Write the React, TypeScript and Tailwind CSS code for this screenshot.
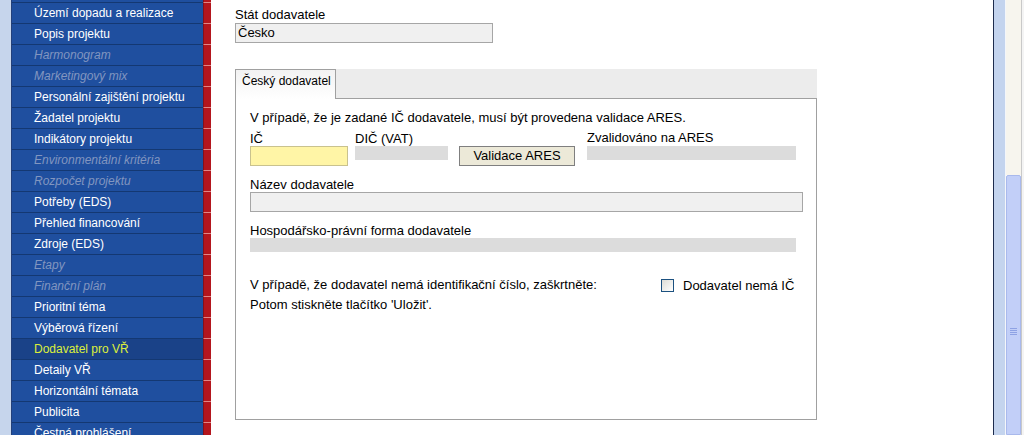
type Kind = "n" | "d" | "s";

const items: [string, Kind][] = [
  ["Území dopadu a realizace", "n"],
  ["Popis projektu", "n"],
  ["Harmonogram", "d"],
  ["Marketingový mix", "d"],
  ["Personální zajištění projektu", "n"],
  ["Žadatel projektu", "n"],
  ["Indikátory projektu", "n"],
  ["Environmentální kritéria", "d"],
  ["Rozpočet projektu", "d"],
  ["Potřeby (EDS)", "n"],
  ["Přehled financování", "n"],
  ["Zdroje (EDS)", "n"],
  ["Etapy", "d"],
  ["Finanční plán", "d"],
  ["Prioritní téma", "n"],
  ["Výběrová řízení", "n"],
  ["Dodavatel pro VŘ", "s"],
  ["Detaily VŘ", "n"],
  ["Horizontální témata", "n"],
  ["Publicita", "n"],
  ["Čestná prohlášení", "n"],
];

function MenuRow({ label, kind }: { label: string; kind: Kind }) {
  const bg = kind === "s" ? "bg-[#1a4288]" : "bg-[#1f4f9f]";
  const text =
    kind === "s"
      ? "text-[#dcef3a]"
      : kind === "d"
        ? "text-[#8296c0] italic"
        : "text-white";
  return (
    <div className="flex h-[21px] shrink-0">
      <div className={`flex-1 overflow-hidden border-t border-[#143872] pl-[22px] text-[12px] leading-[21px] ${bg} ${text}`}>
        {label}
      </div>
      <div className="w-[8px] border-t border-l border-t-[#e08888] border-l-[#86101a] bg-[#b3161e]" />
    </div>
  );
}

function Sidebar() {
  return (
    <div className="flex w-[199px] shrink-0 flex-col overflow-hidden">
      <div className="flex h-[2px] shrink-0">
        <div className="flex-1 bg-[#1f4f9f]" />
        <div className="w-[8px] border-l border-[#86101a] bg-[#b3161e]" />
      </div>
      {items.map(([label, kind]) => (
        <MenuRow key={label} label={label} kind={kind} />
      ))}
    </div>
  );
}

function GrayBar({ w }: { w: string }) {
  return <div className={`h-[14px] bg-[#dcdcdc] ${w}`} />;
}

function Content() {
  return (
    <div className="flex-1 overflow-hidden bg-white pl-[24px] pt-[7px] text-[13px] leading-[15px] text-black">
      <div className="leading-[16px]">Stát dodavatele</div>
      <div className="h-[20px] w-[258px] border border-[#a6a6a6] bg-[#f0f0f0] pl-[2px] leading-[18px]">
        Česko
      </div>

      <div className="mt-[26px] w-[582px]">
        <div className="flex h-[30px]">
          <div className="w-[101px] border-x border-t border-[#a0a0a0] bg-gradient-to-b from-[#f2f2f2] to-white pl-[6px] pt-[4px] text-[12px]">
            Český dodavatel
          </div>
          <div className="flex-1 border-b border-[#a0a0a0] bg-[#ececec]" />
        </div>
        <div className="h-[321px] border-x border-b border-[#a0a0a0] pl-[14px] pt-[11px]">
          <div>V případě, že je zadané IČ dodavatele, musí být provedena validace ARES.</div>

          <div className="mt-[6px] flex">
            <div className="w-[105px]">
              <div>IČ</div>
              <div className="h-[20px] w-[98px] border border-[#c9c28e] bg-[#fff5a6]" />
            </div>
            <div className="w-[104px]">
              <div>DIČ (VAT)</div>
              <GrayBar w="w-[93px]" />
            </div>
            <div className="flex w-[128px] flex-col justify-end">
              <div className="h-[20px] w-[116px] border border-[#7f7f7f] bg-[#ece9d8] text-center leading-[18px]">
                Validace ARES
              </div>
            </div>
            <div>
              <div className="-mt-[1px] mb-[1px]">Zvalidováno na ARES</div>
              <GrayBar w="w-[209px]" />
            </div>
          </div>

          <div className="mt-[11px]">Název dodavatele</div>
          <div className="h-[20px] w-[553px] border border-[#a6a6a6] bg-[#f0f0f0]" />

          <div className="mt-[11px]">Hospodářsko-právní forma dodavatele</div>
          <GrayBar w="w-[546px]" />

          <div className="mt-[23px] flex">
            <div className="w-[411px] leading-[20px]">
              <div>V případě, že dodavatel nemá identifikační číslo, zaškrtněte:</div>
              <div>Potom stiskněte tlačítko 'Uložit'.</div>
            </div>
            <div className="flex h-[20px] items-center">
              <div className="h-[13px] w-[13px] border border-[#1c5180] bg-gradient-to-br from-[#dcdcd6] to-white" />
              <span className="ml-[9px]">Dodavatel nemá IČ</span>
            </div>
          </div>
        </div>
      </div>
    </div>
  );
}

function Scrollbar() {
  return (
    <div className="flex shrink-0">
      <div className="w-[1px] bg-[#1e2c4e]" />
      <div className="w-[11px] bg-[#c4d4ee]" />
      <div className="w-[1px] bg-[#f4f6fa]" />
      <div className="flex w-[15px] flex-col">
        <div className="h-[175px] bg-[#f7f5ee]" />
        <div className="flex flex-1 flex-col items-center rounded-t-[2px] border border-[#a9b9ec] bg-[#c2cff8] pt-[152px]">
          <div className="h-[1px] w-[7px] bg-[#8ea2e4]" />
          <div className="mt-[1px] h-[1px] w-[7px] bg-[#8ea2e4]" />
          <div className="mt-[1px] h-[1px] w-[7px] bg-[#8ea2e4]" />
          <div className="mt-[1px] h-[1px] w-[7px] bg-[#8ea2e4]" />
        </div>
      </div>
      <div className="w-[1px] bg-[#c9c9c9]" />
      <div className="w-[2px] bg-[#f4f4f4]" />
    </div>
  );
}

export default function App() {
  return (
    <div className="flex h-[435px] w-[1024px] overflow-hidden font-['Liberation_Sans',Arial,sans-serif]">
      <div className="w-[12px] shrink-0 border-r border-[#23407a] bg-[#c6d5ec]" />
      <Sidebar />
      <Content />
      <Scrollbar />
    </div>
  );
}
